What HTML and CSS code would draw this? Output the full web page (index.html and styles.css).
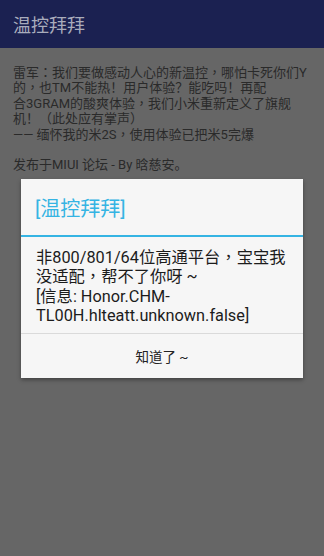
FILE: index.html
```html
<!DOCTYPE html>
<html lang="zh-CN">
<head>
<meta charset="utf-8">
<title>温控拜拜</title>
<link rel="stylesheet" href="styles.css">
</head>
<body>
<div class="screen">
  <header class="appbar">温控拜拜</header>
  <main class="content">
    <p class="para">雷军<span class="pu" lang="zh-Hant">：</span>我们要做感动人心的新温控<span class="pu" lang="zh-Hant">，</span>哪怕卡死你们Y<br>的<span class="pu" lang="zh-Hant">，</span>也TM不能热！用户体验？能吃吗！再配<br>合3GRAM的酸爽体验<span class="pu" lang="zh-Hant">，</span>我们小米重新定义了旗舰<br>机！（此处应有掌声）<br>—— 缅怀我的米2S<span class="pu" lang="zh-Hant">，</span>使用体验已把米5完爆</p>
    <p class="para">发布于MIUI 论坛 - By 晗慈安。</p>
  </main>
  <div class="dialog">
    <div class="dialog-title">[温控拜拜]</div>
    <div class="dialog-msg">非800/801/64位高通平台<span class="pu" lang="zh-Hant">，</span>宝宝我<br>没适配<span class="pu" lang="zh-Hant">，</span>帮不了你呀 ~<br>[信息: Honor.CHM-<br>TL00H.hlteatt.unknown.false]</div>
    <div class="dialog-actions"><span class="btn">知道了 ~</span></div>
  </div>
</div>
</body>
</html>
```
FILE: styles.css
```css
html, body {
  margin: 0;
  padding: 0;
}
body {
  width: 324px;
  height: 556px;
  overflow: hidden;
  font-family: Roboto, "Noto Sans CJK SC", sans-serif;
}
.screen {
  position: relative;
  width: 324px;
  height: 556px;
  background: #666666;
}
.appbar {
  height: 48px;
  box-sizing: border-box;
  padding-left: 13px;
  display: flex;
  align-items: center;
  background: #1b2151;
  color: #a9acbc;
  font-size: 18px;
}
.content {
  padding: 17px 13px 0 13px;
  color: #2a2a2a;
  font-size: 13px;
  line-height: 15.4px;
}
.para {
  margin: 0 0 15px 0;
}
.pu {
  font-family: Roboto, "Noto Sans CJK TC", sans-serif;
}
.dialog {
  position: absolute;
  left: 21px;
  top: 179px;
  width: 282px;
  background: #f6f6f6;
  box-shadow: 0 2px 4px rgba(0, 0, 0, 0.35);
}
.dialog-title {
  height: 58px;
  box-sizing: border-box;
  padding-left: 14px;
  display: flex;
  align-items: center;
  color: #35b4e3;
  font-size: 20px;
  border-bottom: 2px solid #35b4e3;
}
.dialog-msg {
  padding: 11px 14px 8px 15px;
  color: #1c1c1c;
  font-size: 16.3px;
  line-height: 19.3px;
  border-bottom: 1px solid #dadada;
}
.dialog-actions {
  height: 44px;
  display: flex;
  align-items: center;
  justify-content: center;
}
.btn {
  color: #222222;
  font-size: 13.5px;
}
```
